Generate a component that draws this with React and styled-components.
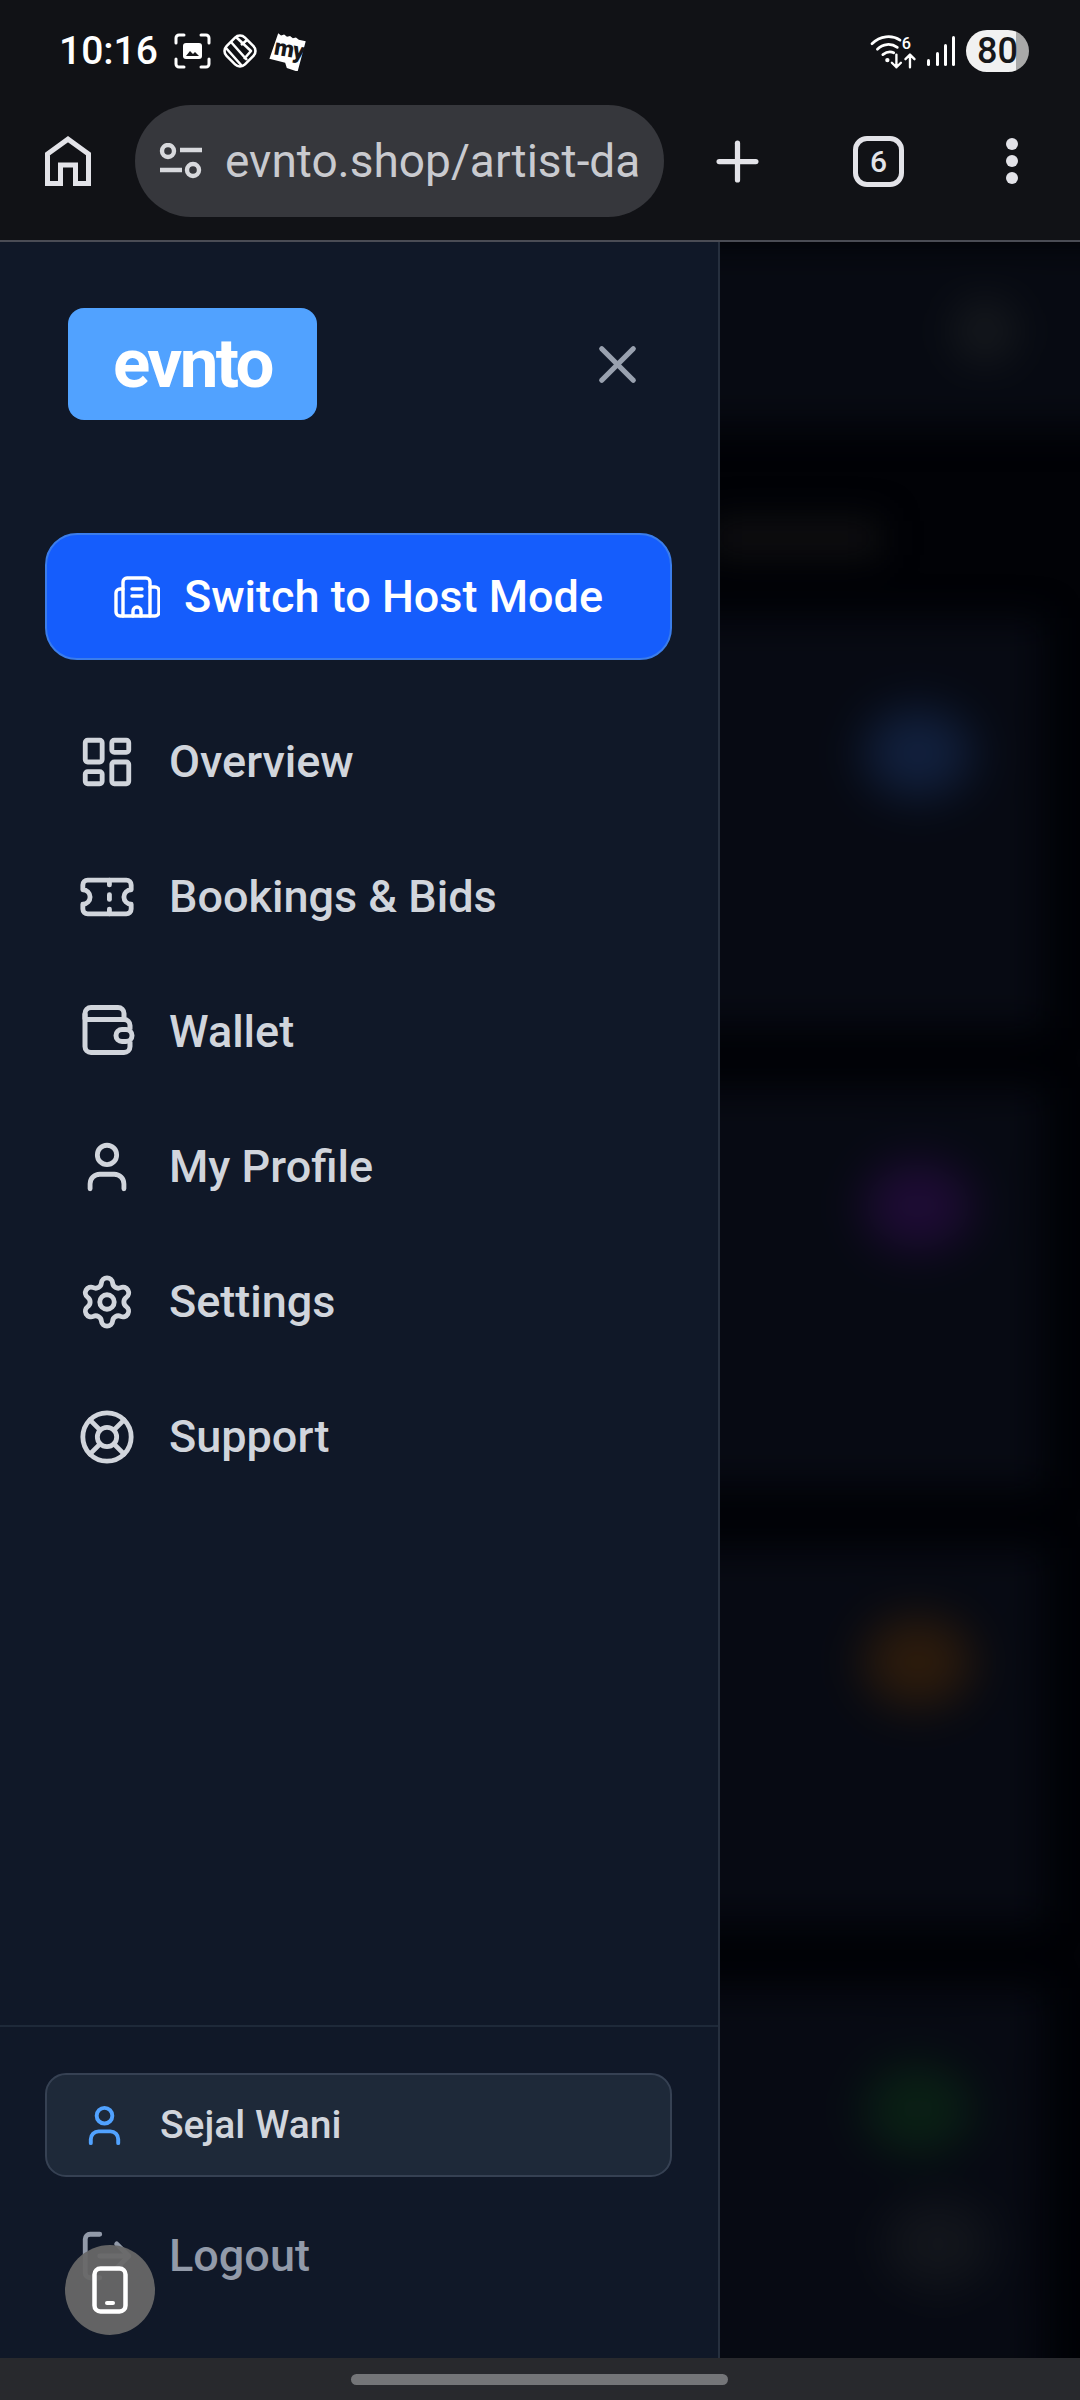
import React from 'react';
import styled, { createGlobalStyle } from 'styled-components';
import { LayoutDashboard, Ticket, User, Settings, LifeBuoy, LogOut, X, Plus } from 'lucide-react';

const GlobalStyle = createGlobalStyle`
  html, body {
    margin: 0;
    padding: 0;
    background: #111216;
  }
  * {
    box-sizing: border-box;
  }
`;

const Screen = styled.div`
  width: 1080px;
  height: 2400px;
  display: flex;
  flex-direction: column;
  overflow: hidden;
  position: relative;
  font-family: Roboto, 'Liberation Sans', sans-serif;
  background: #111216;
`;

const StatusBar = styled.div`
  height: 102px;
  flex: none;
  display: flex;
  align-items: center;
  padding: 0 51px 0 59px;
`;

const Clock = styled.span`
  font-size: 39px;
  font-weight: 500;
  color: #fff;
  margin-right: 16px;
`;

const StatusIcons = styled.div`
  display: flex;
  align-items: center;
  gap: 10px;
`;

const StatusRight = styled.div`
  margin-left: auto;
  display: flex;
  align-items: center;
  gap: 6px;
`;

const Battery = styled.div`
  width: 63px;
  height: 42px;
  margin-left: 5px;
  border-radius: 21px;
  background: linear-gradient(90deg, #f1f1f1 0 50px, #a9a9a9 50px);
  color: #16171a;
  font-size: 36px;
  font-weight: 500;
  display: flex;
  align-items: center;
  justify-content: center;
`;

const Toolbar = styled.div`
  height: 140px;
  flex: none;
  display: flex;
  align-items: flex-start;
  padding-top: 3px;
  border-bottom: 2px solid #4a4c55;
`;

const ToolSlot = styled.div`
  flex: none;
  width: ${(p) => p.$w}px;
  height: 112px;
  display: flex;
  align-items: center;
  justify-content: center;
  color: #e3e3e8;
`;

const UrlPill = styled.div`
  width: 529px;
  height: 112px;
  flex: none;
  border-radius: 56px;
  background: #36373c;
  display: flex;
  align-items: center;
  padding-left: 24px;
  gap: 23px;
  color: #d8d9dd;
`;

const UrlText = styled.span`
  width: 414px;
  overflow: hidden;
  white-space: nowrap;
  font-size: 46px;
  color: #c9cacf;
`;

const TabCount = styled.div`
  width: 51px;
  height: 51px;
  border: 5px solid #e3e3e8;
  border-radius: 14px;
  display: flex;
  align-items: center;
  justify-content: center;
  font-size: 30px;
  font-weight: 500;
  color: #e3e3e8;
`;

const Dots = styled.div`
  display: flex;
  flex-direction: column;
  gap: 5px;
`;

const Dot = styled.span`
  width: 12px;
  height: 12px;
  border-radius: 50%;
  background: #e3e3e8;
`;

const Main = styled.div`
  flex: 1;
  min-height: 0;
  display: flex;
`;

const Sidebar = styled.aside`
  width: 720px;
  flex: none;
  display: flex;
  flex-direction: column;
  background: #101828;
  border-right: 2px solid #262f3e;
`;

const SidebarHead = styled.div`
  display: flex;
  align-items: center;
  justify-content: space-between;
  padding: 66px 69px 0 68px;
`;

const Logo = styled.div`
  width: 249px;
  height: 112px;
  border-radius: 16px;
  background: #51a2ff;
  color: #fff;
  font-size: 69px;
  font-weight: 700;
  letter-spacing: -2.6px;
  display: flex;
  align-items: center;
  justify-content: center;
  padding-bottom: 2px;
`;

const CloseButton = styled.div`
  display: flex;
  color: #99a1af;
`;

const HostButton = styled.div`
  margin: 113px 46px 0 45px;
  height: 127px;
  border-radius: 32px;
  background: #155dfc;
  border: 2px solid #3b7deb;
  color: #fff;
  font-size: 45px;
  font-weight: 500;
  display: flex;
  align-items: center;
  justify-content: center;
  gap: 24px;
`;

const Nav = styled.nav`
  margin-top: 34px;
  display: flex;
  flex-direction: column;
  padding-left: 78px;
`;

const NavItem = styled.div`
  height: 135px;
  display: flex;
  align-items: center;
  gap: 33px;
  font-size: 45px;
  font-weight: 500;
  color: ${(p) => (p.$muted ? '#929aa9' : '#d1d5dc')};
`;

const Footer = styled.div`
  margin-top: auto;
  border-top: 2px solid #1e2939;
  padding: 46px 46px 35px 45px;
`;

const UserCard = styled.div`
  height: 104px;
  border-radius: 21px;
  background: #1e2939;
  border: 2px solid #364153;
  display: flex;
  align-items: center;
  gap: 32px;
  padding-left: 34px;
  font-size: 39px;
  font-weight: 500;
  color: #d1d5dc;
`;

const UserIcon = styled.span`
  display: flex;
  color: #51a2ff;
`;

const LogoutRow = styled.div`
  margin: 11px 0 0 33px;
`;

const Bubble = styled.div`
  position: absolute;
  left: 65px;
  bottom: 65px;
  width: 90px;
  height: 90px;
  border-radius: 50%;
  background: rgba(104, 104, 104, 0.94);
  display: flex;
  align-items: center;
  justify-content: center;
`;

const Backdrop = styled.div`
  flex: 1;
  overflow: hidden;
  background: #010206;
`;

/* the dimmed page behind the drawer, only visible through the blur */
const BlurredPage = styled.div`
  margin-left: -70px;
  width: 480px;
  filter: blur(18px);
`;

const PageHead = styled.div`
  height: 186px;
  background: #070a12;
  display: flex;
  align-items: center;
  justify-content: flex-end;
  padding: 0 110px 8px 0;
`;

const HeadDot = styled.div`
  width: 70px;
  height: 70px;
  border-radius: 50%;
  background: #14171c;
  filter: blur(8px);
`;

const PageTitle = styled.div`
  height: 190px;
  padding: 92px 0 0 60px;
`;

const TitleBar = styled.div`
  width: 170px;
  height: 36px;
  background: #101012;
`;

const Card = styled.div`
  width: 393px;
  height: ${(p) => p.$h}px;
  margin-bottom: ${(p) => p.$gap}px;
  background: #070a13;
  padding: ${(p) => p.$top}px 0 0 213px;
`;

const Glow = styled.div`
  width: 110px;
  height: 90px;
  margin-left: ${(p) => p.$left || 0}px;
  margin-top: ${(p) => p.$mt || 0}px;
  border-radius: 50%;
  background: ${(p) => p.$c};
  filter: blur(16px);
`;

const NavBar = styled.div`
  height: 42px;
  flex: none;
  background: #28292d;
  display: flex;
  justify-content: center;
  padding-top: 16px;
`;

const Handle = styled.div`
  width: 377px;
  height: 11px;
  margin-left: -1px;
  border-radius: 6px;
  background: #747578;
`;

const ScreenshotIcon = () => (
  <svg width="37" height="36" viewBox="0 0 37 36" fill="none" stroke="#fff" strokeWidth="3" strokeLinecap="round">
    <path d="M2 10V5a3 3 0 0 1 3-3h5M27 2h5a3 3 0 0 1 3 3v5M35 26v5a3 3 0 0 1-3 3h-5M10 34H5a3 3 0 0 1-3-3v-5" />
    <rect x="9" y="10" width="19" height="16" rx="3" fill="#fff" stroke="none" />
    <path d="M12 23l4-5 3 3 2-2 4 4z" fill="#16171a" stroke="none" />
  </svg>
);

const ShopIcon = () => (
  <svg width="38" height="38" viewBox="0 0 38 38" fill="none" stroke="#fff" strokeWidth="2.6" strokeLinejoin="round">
    <rect x="6" y="6" width="26" height="26" rx="7" transform="rotate(45 19 19)" />
    <path d="M5 16l16 18M10 10l16 18M15 5l15 14-7 8M20 13l6-5" />
  </svg>
);

const TicketLogo = () => (
  <svg width="40" height="40" viewBox="0 0 40 40">
    <path
      d="M8 3l3 2 3-1 3 2 3-1 3 2 3-1 3 2 7 1-6 31-11-3-2-5-16-3z"
      fill="#fff"
      transform="rotate(4 20 20)"
    />
    <text
      x="20"
      y="26"
      textAnchor="middle"
      fontFamily="Roboto, sans-serif"
      fontSize="23"
      fontWeight="900"
      letterSpacing="-1"
      fill="#16171a"
      transform="rotate(10 20 20)"
    >
      my
    </text>
  </svg>
);

const WifiIcon = () => (
  <svg width="51" height="38" viewBox="0 0 56 42" fill="none" stroke="#fff" strokeLinecap="round">
    <path d="M2 13c9-9 22-10 31-4" strokeWidth="3" />
    <path d="M8 19c6-6 15-7 22-2" strokeWidth="3" />
    <path d="M14 25c4-3 8-4 12-2" strokeWidth="3" />
    <circle cx="19" cy="31" r="2.4" fill="#fff" stroke="none" />
    <text x="35" y="19" fontFamily="Roboto, sans-serif" fontSize="18" fontWeight="500" fill="#fff" stroke="none">
      6
    </text>
    <path d="M29 25v14M24 34l5 5 5-5M44 39V25M39 30l5-5 5 5" strokeWidth="2.6" strokeLinejoin="round" />
  </svg>
);

const SignalIcon = () => (
  <svg width="28" height="32" viewBox="0 0 28 32" fill="#fff">
    <rect x="0" y="24" width="3" height="7" rx="1.5" />
    <rect x="9" y="17" width="3" height="14" rx="1.5" />
    <rect x="17" y="9" width="3" height="22" rx="1.5" />
    <rect x="25" y="1" width="3" height="30" rx="1.5" />
  </svg>
);

const HomeIcon = () => (
  <svg width="46" height="50" viewBox="0 0 46 50" fill="none" stroke="currentColor" strokeWidth="5">
    <path d="M2.5 47.5V18L23 3.2 43.5 18v29.5H30.5V29h-15v18.500z" />
  </svg>
);

const TuneIcon = () => (
  <svg width="43" height="36" viewBox="0 0 43 36" fill="none" stroke="currentColor" strokeWidth="4.4">
    <circle cx="9" cy="8" r="6" />
    <path d="M21 7h22M1 27h22" />
    <circle cx="34" cy="27" r="6" />
  </svg>
);

const HostIcon = () => (
  <svg width="46" height="42" viewBox="10 9 46 42" fill="none" stroke="#fff" strokeWidth="3.4" strokeLinecap="round" strokeLinejoin="round">
    <path d="M19 49V15a4 4 0 0 1 4-4h19a4 4 0 0 1 4 4v34" />
    <path d="M19 22h-3a4 4 0 0 0-4 4v19a4 4 0 0 0 4 4h35a4 4 0 0 0 4-4V24a4 4 0 0 0-4-4h-5" />
    <path d="M28 22h10M28 29h10M29 49v-5a4 4 0 0 1 8 0v5" />
  </svg>
);

const WalletIcon = () => (
  <svg width="58" height="58" viewBox="8 3.500 58 58" fill="none" stroke="currentColor" strokeWidth="5" strokeLinejoin="round">
    <path d="M15 20V14a6 6 0 0 1 6-6h27a6 6 0 0 1 6 6v6" />
    <path d="M15 14v33a6 6 0 0 0 6 6h33a6 6 0 0 0 6-6v-5M60 30v-4a6 6 0 0 0-6-6H15" />
    <rect x="46" y="30" width="16" height="12" rx="6" />
  </svg>
);

const PhoneIcon = () => (
  <svg width="36" height="48" viewBox="0 0 36 48" fill="none" stroke="#fff" strokeWidth="4.5">
    <rect x="2.5" y="2.5" width="31" height="43" rx="6" />
    <rect x="13" y="35" width="10" height="4" rx="2" fill="#fff" stroke="none" />
  </svg>
);

const icon = { size: 58, strokeWidth: 2 };

const navItems = [
  { label: 'Overview', Icon: LayoutDashboard },
  { label: 'Bookings & Bids', Icon: Ticket },
  { label: 'Wallet', Icon: WalletIcon },
  { label: 'My Profile', Icon: User },
  { label: 'Settings', Icon: Settings },
  { label: 'Support', Icon: LifeBuoy },
];

const App = () => (
  <Screen>
    <GlobalStyle />

    <StatusBar>
      <Clock>10:16</Clock>
      <StatusIcons>
        <ScreenshotIcon />
        <ShopIcon />
        <TicketLogo />
      </StatusIcons>
      <StatusRight>
        <WifiIcon />
        <SignalIcon />
        <Battery>80</Battery>
      </StatusRight>
    </StatusBar>

    <Toolbar>
      <ToolSlot $w={135}>
        <HomeIcon />
      </ToolSlot>
      <UrlPill>
        <TuneIcon />
        <UrlText>evnto.shop/artist-da</UrlText>
      </UrlPill>
      <ToolSlot $w={146}>
        <Plus size={63} strokeWidth={2} />
      </ToolSlot>
      <ToolSlot $w={137}>
        <TabCount>6</TabCount>
      </ToolSlot>
      <ToolSlot $w={130}>
        <Dots>
          <Dot />
          <Dot />
          <Dot />
        </Dots>
      </ToolSlot>
    </Toolbar>

    <Main>
      <Sidebar>
        <SidebarHead>
          <Logo>evnto</Logo>
          <CloseButton>
            <X size={63} strokeWidth={2} />
          </CloseButton>
        </SidebarHead>

        <HostButton>
          <HostIcon />
          Switch to Host Mode
        </HostButton>

        <Nav>
          {navItems.map(({ label, Icon }) => (
            <NavItem key={label}>
              <Icon {...icon} />
              {label}
            </NavItem>
          ))}
        </Nav>

        <Footer>
          <UserCard>
            <UserIcon>
              <User size={47} strokeWidth={2} />
            </UserIcon>
            Sejal Wani
          </UserCard>
          <LogoutRow>
            <NavItem $muted>
              <LogOut {...icon} />
              Logout
            </NavItem>
          </LogoutRow>
        </Footer>
      </Sidebar>

      <Backdrop>
        <BlurredPage>
          <PageHead>
            <HeadDot />
          </PageHead>
          <PageTitle>
            <TitleBar />
          </PageTitle>
          <Card $h={410} $gap={60} $top={90}>
            <Glow $c="#12213f" />
          </Card>
          <Card $h={400} $gap={60} $top={73}>
            <Glow $c="#1f0c36" />
          </Card>
          <Card $h={375} $gap={65} $top={69}>
            <Glow $c="#2e1c0c" />
          </Card>
          <Card $h={400} $gap={0} $top={76}>
            <Glow $c="#0a2115" />
            <Glow $c="#13161c" $left={20} $mt={45} />
          </Card>
        </BlurredPage>
      </Backdrop>
    </Main>

    <NavBar>
      <Handle />
    </NavBar>

    <Bubble>
      <PhoneIcon />
    </Bubble>
  </Screen>
);

export default App;
